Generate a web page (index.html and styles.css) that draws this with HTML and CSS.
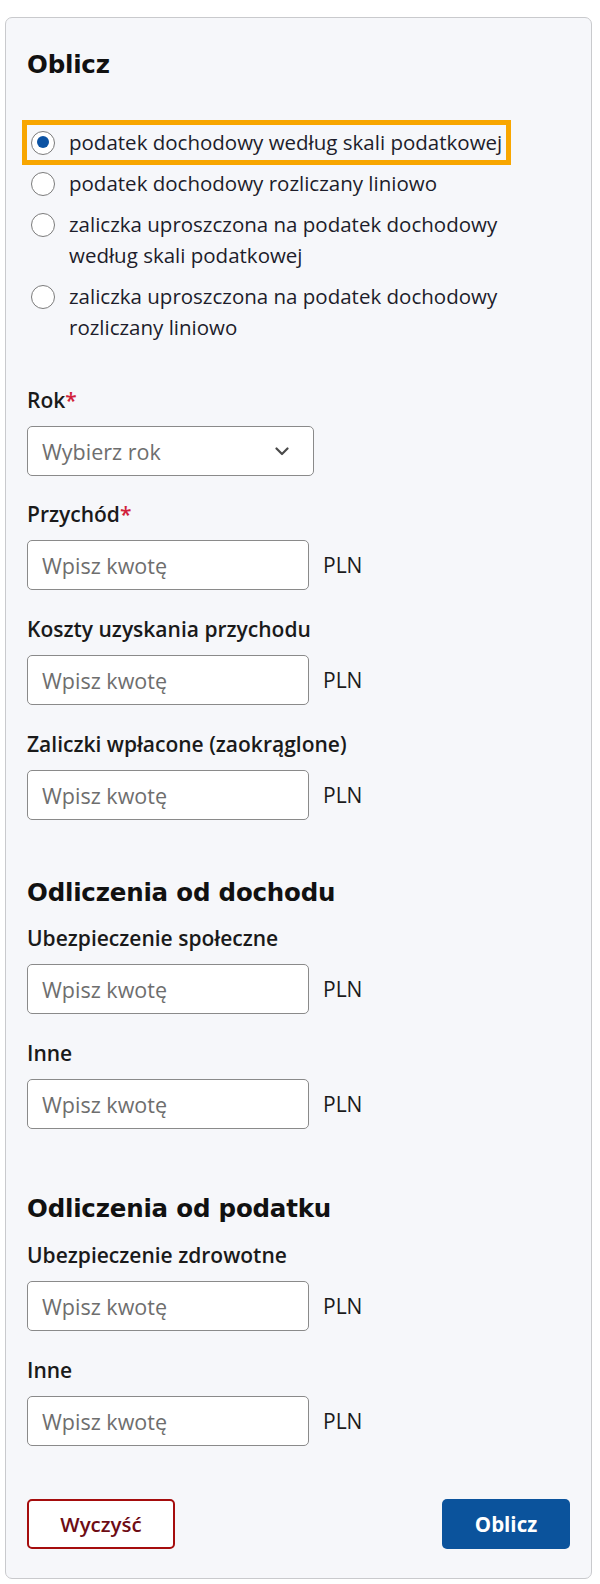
FILE: index.html
```html
<!DOCTYPE html>
<html lang="pl">
<head>
<meta charset="utf-8">
<title>Oblicz</title>
<link rel="stylesheet" href="styles.css">
</head>
<body>
<form class="card">
  <h2 class="title">Oblicz</h2>
  <div class="radios">
    <label class="radio focused"><span class="dot checked"></span><span class="rtext">podatek dochodowy według skali podatkowej</span></label>
    <label class="radio"><span class="dot"></span><span class="rtext">podatek dochodowy rozliczany liniowo</span></label>
    <label class="radio"><span class="dot"></span><span class="rtext">zaliczka uproszczona na podatek dochodowy<br>według skali podatkowej</span></label>
    <label class="radio"><span class="dot"></span><span class="rtext">zaliczka uproszczona na podatek dochodowy<br>rozliczany liniowo</span></label>
  </div>

  <div class="field first">
    <div class="label">Rok<span class="req">*</span></div>
    <div class="select"><span class="ph">Wybierz rok</span>
      <svg class="chev" width="14" height="9" viewBox="0 0 14 9"><path d="M1.5 1.5 L7 7 L12.5 1.5" fill="none" stroke="#4a4a4a" stroke-width="2.2" stroke-linecap="round" stroke-linejoin="round"/></svg>
    </div>
  </div>
  <div class="field second">
    <div class="label">Przychód<span class="req">*</span></div>
    <div class="row"><div class="input"><span class="ph">Wpisz kwotę</span></div><span class="unit">PLN</span></div>
  </div>
  <div class="field">
    <div class="label">Koszty uzyskania przychodu</div>
    <div class="row"><div class="input"><span class="ph">Wpisz kwotę</span></div><span class="unit">PLN</span></div>
  </div>
  <div class="field">
    <div class="label">Zaliczki wpłacone (zaokrąglone)</div>
    <div class="row"><div class="input"><span class="ph">Wpisz kwotę</span></div><span class="unit">PLN</span></div>
  </div>

  <h3 class="section s1">Odliczenia od dochodu</h3>
  <div class="field">
    <div class="label">Ubezpieczenie społeczne</div>
    <div class="row"><div class="input"><span class="ph">Wpisz kwotę</span></div><span class="unit">PLN</span></div>
  </div>
  <div class="field">
    <div class="label">Inne</div>
    <div class="row"><div class="input"><span class="ph">Wpisz kwotę</span></div><span class="unit">PLN</span></div>
  </div>

  <h3 class="section s2">Odliczenia od podatku</h3>
  <div class="field">
    <div class="label">Ubezpieczenie zdrowotne</div>
    <div class="row"><div class="input"><span class="ph">Wpisz kwotę</span></div><span class="unit">PLN</span></div>
  </div>
  <div class="field">
    <div class="label">Inne</div>
    <div class="row"><div class="input"><span class="ph">Wpisz kwotę</span></div><span class="unit">PLN</span></div>
  </div>

  <div class="actions">
    <button type="button" class="btn clear">Wyczyść</button>
    <button type="button" class="btn primary">Oblicz</button>
  </div>
</form>
</body>
</html>
```
FILE: styles.css
```css
* { box-sizing: border-box; }
html, body { margin: 0; padding: 0; background: #ffffff; }
body {
  font-family: "Open Sans", "Liberation Sans", sans-serif;
  color: #1b1b1b;
}
.card {
  display: block;
  width: 587px;
  margin: 17px 0 5px 5px;
  background: #f6f7fa;
  border: 1px solid #c9cacd;
  border-radius: 7px;
  padding: 30px 21px 29px 21px;
}
.title, .section {
  font-family: "DejaVu Sans", "Noto Sans", sans-serif;
  font-weight: 700;
  font-size: 24.5px;
  line-height: 34px;
  margin: 0;
  color: #111111;
  letter-spacing: -0.2px;
}
.radios {
  margin-top: 43px;
  display: flex;
  flex-direction: column;
  gap: 6px;
}
.radio {
  display: flex;
  align-items: flex-start;
  gap: 14px;
  padding: 2px 4px;
  font-size: 20.5px;
  line-height: 31px;
  color: #1d1d2b;
  width: max-content;
}
.radio.focused {
  outline: 5px solid #f8a600;
  outline-offset: 0;
}
.dot {
  flex: none;
  width: 24px;
  height: 24px;
  margin-top: 3.5px;
  border-radius: 50%;
  border: 1.5px solid #7b7b7b;
  background: #ffffff;
  position: relative;
}
.dot.checked::after {
  content: "";
  position: absolute;
  left: 4.5px;
  top: 4.5px;
  width: 12px;
  height: 12px;
  border-radius: 50%;
  background: #0b52a3;
}
.field { margin-top: 25px; }
.field.first { margin-top: 41px; }
.field.second { margin-top: 24px; }
.label {
  font-size: 21px;
  line-height: 28px;
  font-weight: 600;
  color: #1a1a1a;
  margin-bottom: 12px;
}
.req { color: #d11f3c; }
.row { display: flex; align-items: center; gap: 14px; }
.select, .input {
  height: 50px;
  background: #ffffff;
  border: 1px solid #8a8a8a;
  border-radius: 5px;
  display: flex;
  align-items: center;
  padding: 0 14px;
  font-size: 21.5px;
}
.select { width: 287px; justify-content: space-between; padding-right: 24px; }
.input { width: 282px; }
.ph { color: #6e6e6e; }
.unit { font-size: 21px; color: #1b1b1b; }
.section.s1 { margin-top: 56px; }
.section.s2 { margin-top: 63px; }
.section + .field { margin-top: 14px; }
.s2 + .field { margin-top: 15px; }
.actions {
  margin-top: 53px;
  display: flex;
  justify-content: space-between;
}
.btn {
  height: 50px;
  border-radius: 5px;
  font-family: "Open Sans", "Liberation Sans", sans-serif;
  font-size: 20.5px;
  font-weight: 600;
  cursor: pointer;
}
.btn.clear {
  width: 148px;
  background: #ffffff;
  border: 2px solid #a50d0d;
  color: #6e0c14;
}
.btn.primary {
  width: 128px;
  background: #0b539c;
  border: 0;
  color: #ffffff;
  font-weight: 700;
}
```
